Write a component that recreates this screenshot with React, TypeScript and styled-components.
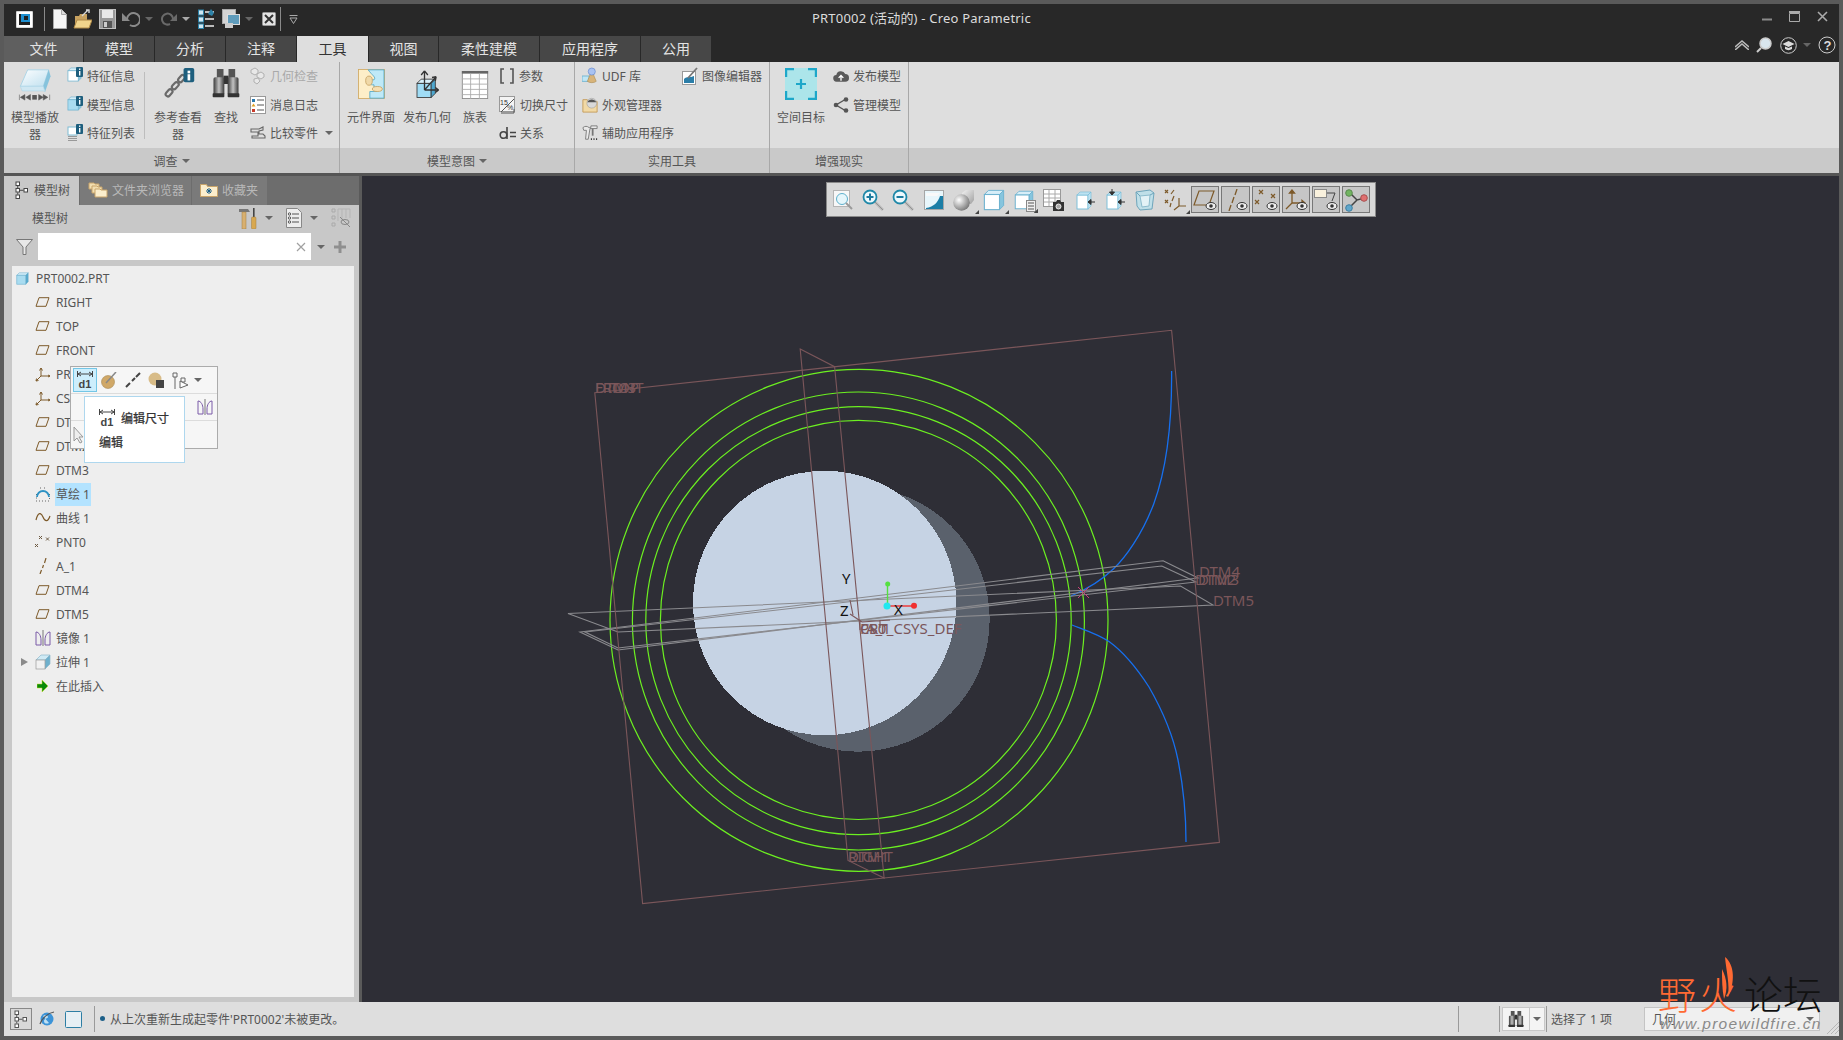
import React from "react";
import styled, { createGlobalStyle } from "styled-components";

const Global = createGlobalStyle`
  html, body { margin: 0; padding: 0; background: #5a5a5a; }
  #root { width: 1843px; height: 1040px; overflow: hidden; }
  * { box-sizing: border-box; }
`;

const FONT = `"Noto Sans", "Noto Sans CJK SC", sans-serif`;

const Window = styled.div`
  position: relative;
  width: 1843px;
  height: 1040px;
  padding: 4px;
  background: #5a5a5a;
  display: flex;
  flex-direction: column;
  font-family: ${FONT};
  font-size: 12px;
  color: #555;
`;

const G = styled.svg<{ $ml?: number; $mr?: number; $mt?: number }>`
  display: block;
  flex: none;
  margin-left: ${(p) => p.$ml ?? 0}px;
  margin-right: ${(p) => p.$mr ?? 0}px;
  margin-top: ${(p) => p.$mt ?? 0}px;
`;

const Caret = styled.span<{ $c?: string; $w?: number }>`
  display: block;
  flex: none;
  width: 0;
  height: 0;
  border-left: ${(p) => p.$w ?? 4}px solid transparent;
  border-right: ${(p) => p.$w ?? 4}px solid transparent;
  border-top: ${(p) => p.$w ?? 4}px solid ${(p) => p.$c ?? "#666"};
`;

/* ---------- title bar ---------- */
const TitleBar = styled.header`
  position: relative;
  height: 32px;
  background: #282828;
  display: flex;
  align-items: center;
  padding: 0 0 2px 12px;
`;
const TitleText = styled.div`
  position: absolute;
  left: 808px;
  top: 5px;
  font-size: 13px;
  line-height: 18px;
  letter-spacing: 0.2px;
  color: #dcdcdc;
  white-space: nowrap;
`;
const QatSep = styled.span<{ $ml: number }>`
  display: block;
  width: 1px;
  height: 24px;
  background: #8a8a8a;
  margin-left: ${(p) => p.$ml}px;
`;
const QatSlot = styled.span<{ $ml: number }>`
  display: flex;
  align-items: center;
  margin-left: ${(p) => p.$ml}px;
`;
const WinControls = styled.div`
  margin-left: auto;
  display: flex;
  align-items: center;
  gap: 17px;
  padding-right: 11px;
  margin-top: -5px;
`;

/* ---------- tabs ---------- */
const TabBar = styled.nav`
  height: 26px;
  background: #282828;
  display: flex;
  align-items: stretch;
  position: relative;
`;
const Tab = styled.div<{ $w: number; $kind?: "file" | "active" }>`
  width: ${(p) => p.$w}px;
  margin-right: 1px;
  padding-bottom: 2px;
  display: flex;
  align-items: center;
  justify-content: center;
  font-size: 14px;
  background: ${(p) => (p.$kind === "file" ? "#5f5f5f" : p.$kind === "active" ? "#dedede" : "#474747")};
  color: ${(p) => (p.$kind === "active" ? "#333" : "#e4e4e4")};
`;
const HelpTray = styled.div`
  position: absolute;
  right: 3px;
  top: -2px;
  display: flex;
  align-items: center;
  height: 22px;
`;

/* ---------- ribbon ---------- */
const Ribbon = styled.section`
  height: 111px;
  display: flex;
  background: #dedede;
`;
const Group = styled.div<{ $w: number }>`
  width: ${(p) => p.$w}px;
  display: flex;
  flex-direction: column;
  border-right: 1px solid #a8a8a8;
`;
const GroupBody = styled.div`
  height: 86px;
  display: flex;
  background: #dedede;
`;
const GroupLabel = styled.div`
  flex: 1;
  display: flex;
  align-items: center;
  justify-content: center;
  gap: 4px;
  background: #c9c9c9;
  color: #555;
`;
const RibbonRest = styled.div`
  flex: 1;
  display: flex;
  flex-direction: column;
`;
const RestTop = styled.div`
  height: 86px;
  background: #dedede;
`;
const RestBottom = styled.div`
  flex: 1;
  background: #c9c9c9;
`;
const Big = styled.div<{ $w: number; $ml: number }>`
  width: ${(p) => p.$w}px;
  margin-left: ${(p) => p.$ml}px;
  display: flex;
  flex-direction: column;
  align-items: center;
  text-align: center;
  flex: none;
`;
const BigIcon = styled.div<{ $pt: number }>`
  height: 47px;
  padding-top: ${(p) => p.$pt}px;
`;
const BigText = styled.div`
  line-height: 17px;
  color: #555;
  width: 100%;
`;
const SmallCol = styled.div<{ $w: number; $ml: number }>`
  width: ${(p) => p.$w}px;
  margin-left: ${(p) => p.$ml}px;
  flex: none;
  display: flex;
  flex-direction: column;
`;
const SmallRow = styled.div<{ $off?: boolean }>`
  height: 28.5px;
  display: flex;
  align-items: center;
  gap: 4px;
  white-space: nowrap;
  color: ${(p) => (p.$off ? "#a9a9a9" : "#555")};
`;
const RibbonSep = styled.span`
  display: block;
  width: 1px;
  height: 67px;
  margin: 10px 0 0 5px;
  background: #bdbdbd;
`;
const RowCaret = styled.span`
  margin-left: 3px;
`;
const Dark = styled.div`
  height: 3px;
  background: #555;
`;

/* ---------- main ---------- */
const Main = styled.main`
  flex: 1;
  min-height: 0;
  display: flex;
`;
const Left = styled.aside`
  width: 355px;
  display: flex;
  flex-direction: column;
  background: #c8c8c8;
`;
const PanelTabs = styled.div`
  height: 29px;
  flex: none;
  display: flex;
  background: #6d6d6d;
`;
const PanelTab = styled.div<{ $w: number; $on?: boolean }>`
  width: ${(p) => p.$w}px;
  display: flex;
  align-items: center;
  gap: ${(p) => (p.$on ? 5 : 4)}px;
  padding: 0 0 2px ${(p) => (p.$on ? 11 : 8)}px;
  margin-right: 1px;
  background: ${(p) => (p.$on ? "#c8c8c8" : "#7a7a7a")};
  color: ${(p) => (p.$on ? "#555" : "#b8b8b8")};
`;
const PanelHead = styled.div`
  height: 26px;
  flex: none;
  display: flex;
  align-items: center;
  padding-left: 28px;
  position: relative;
`;
const HeadTools = styled.div`
  margin-left: auto;
  padding-right: 8px;
  display: flex;
  align-items: center;
`;
const HeadGap = styled.span<{ $w: number }>`
  display: block;
  width: ${(p) => p.$w}px;
`;
const FilterRow = styled.div`
  height: 27px;
  margin-top: 2px;
  flex: none;
  display: flex;
  align-items: center;
  padding-left: 12px;
`;
const SearchBox = styled.div`
  width: 273px;
  height: 27px;
  margin-left: 5px;
  background: #fff;
  display: flex;
  align-items: center;
  justify-content: flex-end;
  padding-right: 4px;
  color: #9a9a9a;
`;
const Tree = styled.div`
  position: relative;
  flex: 1;
  margin: 6px 5px 5px 8px;
  padding-top: 0;
  background: #eeeeee;
`;
const Row = styled.div`
  height: 24px;
  display: flex;
  align-items: center;
  white-space: nowrap;
`;
const Gutter = styled.span<{ $w: number }>`
  width: ${(p) => p.$w}px;
  display: flex;
  justify-content: flex-end;
  flex: none;
`;
const RowIconBox = styled.span`
  width: 17px;
  display: flex;
  justify-content: center;
  flex: none;
`;
const Label = styled.span<{ $sel?: boolean }>`
  margin-left: 4px;
  padding: 0 1px;
  line-height: 23px;
  height: 23px;
  color: #555;
  background: ${(p) => (p.$sel ? "#b3e3ff" : "transparent")};
`;
const Expander = styled.span`
  display: block;
  width: 0;
  height: 0;
  margin-right: 6px;
  border-top: 4.5px solid transparent;
  border-bottom: 4.5px solid transparent;
  border-left: 7px solid #8a8a8a;
`;
const Mini = styled.div`
  position: absolute;
  left: 58px;
  top: 100px;
  width: 148px;
  height: 83px;
  background: #f6f6f6;
  border: 1px solid #ababab;
  display: flex;
  flex-direction: column;
`;
const MiniRow = styled.div<{ $line?: boolean }>`
  height: 27px;
  display: flex;
  align-items: center;
  flex: none;
  padding-left: 2px;
  border-bottom: ${(p) => (p.$line ? "1px solid #dcdcdc" : "0")};
`;
const MiniBtn = styled.span<{ $on?: boolean }>`
  width: 24px;
  height: 24px;
  display: flex;
  align-items: center;
  justify-content: center;
  background: ${(p) => (p.$on ? "#cdeefc" : "transparent")};
  border: 1px solid ${(p) => (p.$on ? "#74c6e6" : "transparent")};
`;
const MiniEnd = styled.span<{ $pr: number }>`
  margin-left: auto;
  padding-right: ${(p) => p.$pr}px;
`;
const Tip = styled.div`
  position: absolute;
  left: 72px;
  top: 130px;
  width: 101px;
  height: 67px;
  background: #fff;
  border: 1px solid #aed7ee;
  padding: 10px 0 0 14px;
  color: #333;
  -webkit-text-stroke: 0.25px #333;
`;
const TipRow = styled.div`
  display: flex;
  align-items: center;
  gap: 6px;
  height: 22px;
`;
const TipPlain = styled.div`
  height: 22px;
  line-height: 22px;
  margin-top: 3px;
`;

/* ---------- viewport ---------- */
const Viewport = styled.div`
  position: relative;
  flex: 1;
  margin-left: 3px;
  background: #2e2e36;
`;
const Scene = styled.svg`
  position: absolute;
  inset: 0;
  display: block;
`;
const ViewBar = styled.div`
  position: absolute;
  left: 464px;
  top: 6px;
  width: 550px;
  height: 35px;
  background: #d8d8d8;
  border: 1px solid #8a8a8a;
  display: flex;
  align-items: center;
  padding-left: 1px;
`;
const ViewBtn = styled.span<{ $on?: boolean }>`
  width: 28.2px;
  height: 27px;
  margin: 0 1px;
  flex: none;
  display: flex;
  align-items: center;
  justify-content: center;
  background: ${(p) => (p.$on ? "#c6c6c6" : "transparent")};
  border: 1px solid ${(p) => (p.$on ? "#777" : "transparent")};
`;

/* ---------- status ---------- */
const Status = styled.footer`
  height: 34px;
  flex: none;
  background: #dedede;
  display: flex;
  align-items: center;
  padding-left: 6px;
  color: #555;
`;
const StatusBox = styled.span`
  width: 22px;
  height: 22px;
  border: 1px solid #888;
  display: flex;
  align-items: center;
  justify-content: center;
  background: #d8d8d8;
`;
const StatusSlot = styled.span<{ $ml: number }>`
  margin-left: ${(p) => p.$ml}px;
  display: flex;
  align-items: center;
  flex: none;
`;
const StatusSep = styled.span<{ $ml: number }>`
  display: block;
  width: 1px;
  height: 26px;
  background: #9a9a9a;
  margin-left: ${(p) => p.$ml}px;
  flex: none;
`;
const Bullet = styled.span`
  width: 5px;
  height: 5px;
  border-radius: 50%;
  background: #1c5f88;
  margin: -2px 0 0 5px;
  flex: none;
`;
const Msg = styled.span`
  margin-left: 5px;
  white-space: nowrap;
`;
const RightStatus = styled.div`
  margin-left: auto;
  display: flex;
  align-items: center;
  height: 100%;
`;
const FindBtn = styled.span`
  width: 28px;
  height: 24px;
  margin-left: 2px;
  background: #f4f4f4;
  border: 1px solid #c8c8c8;
  display: flex;
  align-items: center;
  justify-content: center;
`;
const FindDrop = styled.span`
  width: 15px;
  height: 24px;
  background: #f4f4f4;
  border: 1px solid #c8c8c8;
  border-left: 0;
  display: flex;
  align-items: center;
  justify-content: center;
`;
const SelText = styled.span`
  margin-left: 4px;
  width: 93px;
  white-space: nowrap;
`;
const GeoSelect = styled.div`
  width: 176px;
  height: 24px;
  background: #f0f0f0;
  border: 1px solid #c4c4c4;
  display: flex;
  align-items: center;
  justify-content: space-between;
  padding: 0 5px 0 7px;
`;
const Grip = styled.span`
  width: 19px;
  display: flex;
  justify-content: flex-end;
  align-self: flex-end;
  padding-bottom: 2px;
`;

/* ---------- watermark ---------- */
const Mark = styled.div`
  position: absolute;
  left: 1660px;
  top: 955px;
  width: 170px;
  height: 80px;
  pointer-events: none;
  font-weight: 300;
`;
const MarkFire = styled.span`
  position: absolute;
  left: -2px;
  top: 17px;
  font-size: 38px;
  line-height: 44px;
  letter-spacing: 3px;
  color: #ff6a33;
  white-space: nowrap;
`;
const MarkForum = styled.span`
  position: absolute;
  left: 84px;
  top: 17px;
  font-size: 39px;
  line-height: 44px;
  color: #111;
  white-space: nowrap;
`;
const MarkUrl = styled.span`
  position: absolute;
  left: 0;
  top: 59px;
  font-family: "Liberation Sans", sans-serif;
  font-style: italic;
  font-size: 15.5px;
  line-height: 20px;
  letter-spacing: 1.3px;
  color: #8a8a8a;
  white-space: nowrap;
`;
const MarkFlame = styled.svg`
  position: absolute;
  left: 50px;
  top: 0;
`;

/* ---------- icons ---------- */
const Cube: React.FC<{ s: number; f?: string; t?: string; r?: string }> = ({ s, f = "#fff", t = "#d6eef8", r = "#86c5de" }) => (
  <G width={s} height={s} viewBox="0 0 16 16">
    <path d="M1 4l3-3h11l-3 3z" fill={t} stroke="#6fb3d0" strokeWidth=".7" />
    <path d="M12 4l3-3v11l-3 3z" fill={r} stroke="#6fb3d0" strokeWidth=".7" />
    <rect x="1" y="4" width="11" height="11" fill={f} stroke="#6fb3d0" strokeWidth=".8" />
  </G>
);
const InfoBadge = styled.svg`
  position: absolute;
  right: 0;
  top: 0;
`;
const Info: React.FC = () => (
  <InfoBadge width="7" height="10" viewBox="0 0 7 10">
    <rect width="7" height="10" rx="1" fill="#1e5f7e" />
    <rect x="3" y="1.500" width="1.400" height="1.400" fill="#fff" />
    <rect x="3" y="4" width="1.400" height="4.500" fill="#fff" />
  </InfoBadge>
);
const InfoWrap = styled.span`
  position: relative;
  display: block;
  width: 16px;
  height: 18px;
  flex: none;
`;
const FeatInfo: React.FC<{ f?: string }> = ({ f }) => (
  <InfoWrap>
    <Cube s={15} f={f} />
    <Info />
  </InfoWrap>
);
const ListInfo = () => (
  <InfoWrap>
    <G width="16" height="18" viewBox="0 0 16 18">
      <rect x="1" y="3" width="9" height="8" fill="#fff" stroke="#7fbcd4" />
      <path d="M1 12.500h9M1 14.500h9M1 16.500h9" stroke="#999" />
    </G>
    <Info />
  </InfoWrap>
);
const PlayerIcon = () => (
  <G width="36" height="33" viewBox="0 0 36 36">
    <defs>
      <linearGradient id="pl" x1="0" y1="0" x2="1" y2="1">
        <stop offset="0" stopColor="#fdfeff" />
        <stop offset="1" stopColor="#bfe0ef" />
      </linearGradient>
    </defs>
    <path d="M2 20L10 2h23l-6 18z" fill="url(#pl)" stroke="#a9d3e6" />
    <path d="M27 20l6-18 2 7-6 17z" fill="#86c3dc" />
    <path d="M2 20l2 5h23l2 1-2-6z" fill="#cfe7f2" stroke="#a9d3e6" strokeWidth=".6" />
    <path d="M1 29v6M7 29l-5 3 5 3zM13 29l-5 3 5 3z" fill="#555" stroke="#555" strokeWidth=".6" />
    <rect x="15" y="29.500" width="5" height="5" fill="#555" />
    <path d="M22 29l5 3-5 3zM27 29l5 3-5 3zM34 29v6" fill="#555" stroke="#555" strokeWidth=".6" />
  </G>
);
const ChainIcon = () => (
  <G width="32" height="32" viewBox="0 0 36 36" $ml={4}>
    <g fill="none" stroke="#6a6a6a" strokeWidth="2.400">
      <rect x="1" y="26" width="9" height="5" rx="2.500" transform="rotate(-48 5 28)" />
      <rect x="8" y="18" width="9" height="5" rx="2.500" transform="rotate(-48 12 20)" />
      <rect x="15" y="10" width="9" height="5" rx="2.500" transform="rotate(-48 19 12)" />
    </g>
    <rect x="22" y="0" width="12" height="16" rx="2" fill="#1e5f7e" />
    <rect x="26.500" y="3" width="3" height="3" fill="#fff" />
    <rect x="26.500" y="7" width="3" height="7" fill="#fff" />
  </G>
);
const BinoIcon: React.FC<{ w?: number; h?: number }> = ({ w = 32, h = 30 }) => (
  <G width={w} height={h} viewBox="0 0 32 36">
    <defs>
      <linearGradient id="bn" x1="0" y1="0" x2="1" y2="0">
        <stop offset="0" stopColor="#3c3c3c" />
        <stop offset=".5" stopColor="#c2c2c2" />
        <stop offset="1" stopColor="#3a3a3a" />
      </linearGradient>
    </defs>
    <rect x="5" y="0" width="8" height="12" fill="#555" />
    <rect x="19" y="0" width="8" height="12" fill="#555" />
    <rect x="13" y="8" width="6" height="10" fill="#333" />
    <rect x="1" y="10" width="13" height="21" rx="2" fill="url(#bn)" />
    <rect x="18" y="10" width="13" height="21" rx="2" fill="url(#bn)" />
    <rect x="0" y="29" width="14" height="5" rx="1" fill="#333" />
    <rect x="18" y="29" width="14" height="5" rx="1" fill="#333" />
  </G>
);
const GeoCheck = () => (
  <G width="16" height="18" viewBox="0 0 16 18">
    <path d="M1 3l4-2 3 2v3l-3 2-4-2zM7 7l4-2 3 2v3l-3 2-4-2zM4 12l4-1 2 3-3 3-3-2z" fill="#e8e8e8" stroke="#b0b0b0" />
  </G>
);
const LogIcon = () => (
  <G width="16" height="18" viewBox="0 0 16 18">
    <rect x=".5" y=".5" width="15" height="17" fill="#fff" stroke="#999" />
    <path d="M7 4h7M7 9h7M7 14h7" stroke="#555" />
    <rect x="2" y="3" width="3" height="3" fill="#2a7ab0" />
    <path d="M3.500 7.500l2 3h-4z" fill="#e0a020" />
    <rect x="2" y="13" width="3" height="3" fill="#c83a2a" />
  </G>
);
const CompareIcon = () => (
  <G width="16" height="16" viewBox="0 0 16 16">
    <path d="M1 4h8l4-2v3l-4 1v3h4l2 2v2H2v-2h6V7H1z" fill="none" stroke="#666" strokeWidth="1.100" />
  </G>
);
const PuzzleIcon = () => (
  <G width="31" height="30" viewBox="0 0 32 36">
    <rect x=".5" y=".5" width="31" height="35" fill="#fdeec8" stroke="#d0a860" />
    <path d="M12 1h19v34H14v-8h8c3 0 3-4 0-4h-3v-4h-2c-6 0-6-6 0-6h2c3-3-2-5-7-12z" fill="#bfe9f7" stroke="#4ea6c8" />
    <ellipse cx="13" cy="14" rx="4" ry="5.500" fill="#f0d9a8" stroke="#c7a264" />
    <ellipse cx="23" cy="24" rx="6" ry="3" fill="#f6dfb2" stroke="#c7a264" />
  </G>
);
const PublishIcon = () => (
  <G width="32" height="30" viewBox="5 0 32 36">
    <rect x="9" y="16" width="17" height="17" fill="#9fdcf5" stroke="#333" />
    <path d="M9 16l5-5h17l-5 5z" fill="#d9f1fb" stroke="#333" />
    <path d="M26 16l5-5v17l-5 5z" fill="#4ea8d0" stroke="#333" />
    <path d="M18 24V1M18 1l-4 5M18 1l4 5M18 24l14-16M32 8l-5 1M32 8l-1 5M18 24h17M35 24l-4-3M35 24l-4 3" stroke="#333" strokeWidth="1.600" fill="none" />
  </G>
);
const TableIcon = () => (
  <G width="30" height="28" viewBox="0 0 30 32">
    <rect x=".5" y=".5" width="29" height="31" fill="#fff" stroke="#888" />
    <rect x="0" y="0" width="30" height="3" fill="#666" />
    <path d="M0 9h30M0 15h30M0 21h30M0 27h30M10 3v29M20 3v29" stroke="#aaa" />
  </G>
);
const ParamIcon = () => (
  <G width="16" height="18" viewBox="0 0 16 18">
    <path d="M5 2H2v14h3M11 2h3v14h-3" stroke="#555" strokeWidth="1.600" fill="none" />
  </G>
);
const SwitchDim = () => (
  <G width="17" height="18" viewBox="0 0 17 18">
    <rect x=".5" y=".5" width="15" height="15" fill="#f4f4f4" stroke="#999" />
    <text x="1" y="9" fontSize="7" fill="#333" fontFamily="Liberation Sans">15</text>
    <text x="8" y="14" fontSize="7" fill="#333" fontFamily="Liberation Sans">%</text>
    <path d="M2 16L15 3M15 13v4H2" stroke="#555" fill="none" />
  </G>
);
const RelIcon = () => (
  <G width="17" height="18" viewBox="0 0 17 18">
    <circle cx="4.500" cy="11" r="3.300" fill="none" stroke="#444" strokeWidth="1.600" />
    <path d="M8 3v12M11 8.500h6M11 12.500h6" stroke="#444" strokeWidth="1.600" />
  </G>
);
const UdfIcon = () => (
  <G width="16" height="18" viewBox="0 0 18 18">
    <rect x="0" y="9" width="8" height="6" fill="#bfe6f5" stroke="#6fb3d0" />
    <path d="M11 3l5 12c-2 2-8 2-10 0z" fill="#d8b47a" stroke="#a58548" strokeWidth=".6" />
    <circle cx="11" cy="4" r="4" fill="#a8c2f2" stroke="#5f84cc" strokeWidth=".7" />
  </G>
);
const AppearIcon = () => (
  <G width="16" height="18" viewBox="0 0 18 18">
    <path d="M1 3h5l1 2h10v12H1z" fill="#f1d9a6" stroke="#c49a56" />
    <circle cx="11" cy="7" r="5.500" fill="#d9d9d9" stroke="#888" strokeWidth=".5" />
    <path d="M6 6a5.500 5.500 0 0 1 10 0z" fill="#555" />
  </G>
);
const AuxIcon = () => (
  <G width="16" height="18" viewBox="0 0 18 18">
    <path d="M1 3c2-2 5-2 7 0l2 0 0-2h7v3H9L7 16 4 16 5 6 2 6z" fill="#e9e9e9" stroke="#777" />
    <path d="M12 4v8" stroke="#777" strokeWidth="2" />
    <path d="M10 16h1M13 16h1M16 16h1" stroke="#111" strokeWidth="2" />
  </G>
);
const ImgEdit = () => (
  <G width="16" height="18" viewBox="0 0 16 18">
    <rect x=".5" y="4.500" width="13" height="13" fill="#fff" stroke="#9a9a9a" />
    <path d="M2 16v-4c3-3 6-1 10-3v7z" fill="#2b7ea8" />
    <path d="M6 11L15 1" stroke="#777" strokeWidth="1.800" />
  </G>
);
const TargetIcon = () => (
  <G width="32" height="32" viewBox="0 0 32 32">
    <rect width="32" height="32" fill="#ace5ea" />
    <path d="M1 9V1h8M23 1h8v8M31 23v8h-8M9 31H1v-8" fill="none" stroke="#1da7c9" strokeWidth="2.400" />
    <path d="M16 11v10M11 16h10" stroke="#1da7c9" strokeWidth="2.200" />
  </G>
);
const CloudIcon = () => (
  <G width="16" height="14" viewBox="0 0 17 14">
    <path d="M4 13a3.500 3.500 0 0 1-.5-7A5 5 0 0 1 13 5a4 4 0 0 1 0 8z" fill="#5a5a5a" />
    <path d="M8.500 12V7M6 9l2.500-2.500L11 9" stroke="#fff" strokeWidth="1.400" fill="none" />
  </G>
);
const ShareIcon = () => (
  <G width="16" height="16" viewBox="0 0 16 16">
    <path d="M13 2L3 8l10 6" stroke="#555" strokeWidth="1.400" fill="none" />
    <circle cx="13" cy="2.500" r="2.300" fill="#555" />
    <circle cx="3" cy="8" r="2.300" fill="#555" />
    <circle cx="13" cy="13.500" r="2.300" fill="#555" />
  </G>
);

/* Tree icons */
const BR = "#7d5a2a";
const Plane = () => (
  <G width="15" height="10" viewBox="0 0 15 10">
    <path d="M4 .7h10L11 9.300H1z" fill="none" stroke={BR} />
  </G>
);
const Csys = () => (
  <G width="16" height="16" viewBox="0 0 16 16">
    <path d="M6 10V2M6 2L4.500 4.500M6 2l1.500 2.500M6 10h9M15 10l-2-1M15 10l-2 1M6 10l-5 5M1 15l.5-2.500M1 15l2.500-.5" stroke={BR} fill="none" />
  </G>
);
const SketchI = () => (
  <G width="16" height="15" viewBox="0 0 16 15">
    <path d="M1 7.500h1M1 11h1M1 14h1M4 14h1M7 14h1M10 14h1M13 14h1M14.500 11v1M14.500 7v1M5 1h1M9 1h1" stroke="#666" />
    <path d="M2 10a6 6 0 0 1 12 0" fill="none" stroke="#2d92c4" strokeWidth="1.800" />
  </G>
);
const CurveI = () => (
  <G width="16" height="10" viewBox="0 0 16 10">
    <path d="M1 7c2-8 5-8 7-3s5 5 7-1" fill="none" stroke={BR} strokeWidth="1.200" />
  </G>
);
const PointsI = () => (
  <G width="16" height="14" viewBox="0 0 16 14">
    <path d="M4 1l3 3M7 1L4 4M11 2.500l3 3M14 2.500l-3 3M0 9l3 3M3 9l-3 3" stroke="#6d5a42" />
  </G>
);
const AxisI = () => (
  <G width="10" height="16" viewBox="0 0 10 16">
    <path d="M8 0L6.500 5M5.500 7L4.500 10M3.500 12L2 16" stroke={BR} strokeWidth="1.200" />
  </G>
);
const MirrorI = () => (
  <G width="16" height="16" viewBox="0 0 16 16">
    <path d="M1 15V2c3 0 5 4 5 8v5zM15 15V2c-3 0-5 4-5 8v5z" fill="none" stroke="#7a5ba8" />
    <path d="M8 0v16" stroke="#777" />
  </G>
);
const ExtrudeI = () => (
  <G width="16" height="16" viewBox="0 0 16 16">
    <path d="M1 6l5-5h9L10 6z" fill="#cfeaf5" stroke="#8cb8cc" strokeWidth=".7" />
    <path d="M10 6l5-5v9l-5 5z" fill="#6fb0cc" stroke="#8cb8cc" strokeWidth=".7" />
    <rect x="1" y="6" width="9" height="9" fill="#f1f1f1" stroke="#999" strokeWidth=".7" />
  </G>
);
const InsertI = () => (
  <G width="12" height="12" viewBox="0 0 12 12">
    <path d="M0 4h5V0l6 6-6 6V8H0z" fill="#0a8a0a" stroke="#c8e020" strokeWidth=".5" />
  </G>
);
const Dim: React.FC = () => (
  <G width="16" height="18" viewBox="0 0 16 18">
    <path d="M.5 0v6M15.500 0v6M1 3h14M1 3l3-2M1 3l3 2M15 3l-3-2M15 3l-3 2" stroke="#444" fill="none" />
    <text x="1.500" y="17" fontSize="11" fontWeight="700" fontFamily="Liberation Sans" fill="#444">d1</text>
  </G>
);

/* header tools */
const ToolsI = () => (
  <G width="18" height="21" viewBox="0 0 18 21">
    <path d="M0 1h9l2 3H0z" fill="#777" />
    <rect x="3" y="4" width="4" height="17" fill="#d8b070" stroke="#a07c40" strokeWidth=".5" />
    <rect x="14" y="0" width="1.600" height="9" fill="#444" />
    <rect x="12.500" y="9" width="4.500" height="12" rx="1" fill="#d8a850" stroke="#a07c40" strokeWidth=".5" />
  </G>
);
const ListDoc = () => (
  <G width="16" height="20" viewBox="0 0 16 20">
    <path d="M.5.500h11l4 4v15H.5z" fill="#eee" stroke="#888" />
    <path d="M6 6h7M6 10h7M6 14h7" stroke="#555" />
    <circle cx="3.500" cy="6" r="1.200" fill="none" stroke="#555" />
    <circle cx="3.500" cy="10" r="1.200" fill="none" stroke="#555" />
    <circle cx="3.500" cy="14" r="1.200" fill="none" stroke="#555" />
  </G>
);
const ShowI = () => (
  <G width="20" height="20" viewBox="0 0 20 20">
    <path d="M1 1h3v3H1zM1 8h3v3H1zM1 15h3v3H1z" fill="none" stroke="#aaa" />
    <path d="M7 1h12v9M7 1v12M11 1v12M15 1v9" stroke="#b5b5b5" fill="none" />
    <ellipse cx="14" cy="14" rx="4" ry="2.500" fill="none" stroke="#888" />
    <path d="M9 9l10 10" stroke="#888" />
  </G>
);
const FilterI = () => (
  <G width="17" height="16" viewBox="0 0 17 16">
    <path d="M.5.500h16L10 8v7.500H7V8z" fill="#e8e8e8" stroke="#777" />
  </G>
);
const TreeMini: React.FC<{ c?: string }> = ({ c = "#444" }) => (
  <G width="14" height="18" viewBox="0 0 14 18">
    <rect x="1" y="1" width="3.500" height="3.500" fill="#fff" stroke={c} />
    <rect x="1" y="7.500" width="3.500" height="3.500" fill="#fff" stroke={c} />
    <rect x="1" y="14" width="3.500" height="3.500" fill="#fff" stroke={c} />
    <rect x="9" y="7.500" width="3.500" height="3.500" fill="#fff" stroke={c} />
    <path d="M2.750 5v2M2.750 11.500v2M5 9.250h3.500" stroke={c} />
  </G>
);
const FoldersI = () => (
  <G width="20" height="18" viewBox="0 0 20 18">
    <path d="M1 5V2h5l1 1h4v5H1z" fill="#f2deb0" stroke="#c8a46a" />
    <path d="M4 9V5h5l1 1h4v6H4z" fill="#f2deb0" stroke="#c8a46a" />
    <path d="M7 16V8h5l1 1h6v7z" fill="#fbeecd" stroke="#c8a46a" />
  </G>
);
const FavI = () => (
  <G width="18" height="16" viewBox="0 0 18 16">
    <path d="M.5 14.500V2.500h6l1 2h10v10z" fill="#fbeecd" stroke="#c8a46a" />
    <path d="M9 6v6M6 9h6M7 7l4 4M11 7l-4 4" stroke="#1c5f88" />
  </G>
);

/* QAT */
const Logo = () => (
  <G width="17" height="17" viewBox="0 0 17 17">
    <rect x=".75" y=".75" width="15.500" height="15.500" fill="#fff" stroke="#fff" />
    <rect x="3" y="3" width="11" height="11" fill="#202020" />
    <path d="M5 3h9v8H5z" fill="#1f8fcf" />
    <path d="M8 5h4v4H8z" fill="#202020" />
  </G>
);
const DocI = () => (
  <G width="14" height="20" viewBox="0 0 14 20">
    <path d="M.5.500h8l5 5v14H.5z" fill="#f6f6f6" stroke="#aaa" />
    <path d="M8.500.500v5h5" fill="#ddd" stroke="#aaa" />
  </G>
);
const OpenI = () => (
  <G width="19" height="20" viewBox="0 0 19 20">
    <path d="M2 19V7h4l1-2h7v14z" fill="#c8a260" />
    <path d="M1 19l3-8h15l-3 8z" fill="#f0d48c" stroke="#b08a48" />
    <path d="M9 7L15 1M13 1l3 0 0 3" stroke="#d8d8d8" strokeWidth="1.400" fill="none" />
  </G>
);
const SaveI = () => (
  <G width="17" height="20" viewBox="0 0 17 20">
    <rect x=".5" y=".5" width="16" height="19" fill="#9a9a9a" stroke="#c0c0c0" />
    <rect x="3" y="1" width="11" height="8" fill="#e8e8e8" />
    <rect x="4" y="12" width="9" height="7" fill="#555" />
    <rect x="5" y="13" width="3" height="5" fill="#ccc" />
  </G>
);
const UndoI = () => (
  <G width="18" height="16" viewBox="0 0 18 16">
    <path d="M5 8a6.500 6.500 0 1 1 3 6" fill="none" stroke="#8a8a8a" strokeWidth="2" />
    <path d="M0 2v8h8z" fill="#8a8a8a" />
  </G>
);
const RedoI = () => (
  <G width="16" height="14" viewBox="0 0 16 14">
    <path d="M12 7a5.500 5.500 0 1 0-3 5" fill="none" stroke="#6a6a6a" strokeWidth="2" />
    <path d="M16 2v7H9z" fill="#6a6a6a" />
  </G>
);
const RegenI = () => (
  <G width="17" height="20" viewBox="0 0 17 20">
    <rect x=".5" y="1" width="5" height="5" fill="#cfe7f2" stroke="#2d82a8" />
    <rect x=".5" y="8" width="5" height="5" fill="#cfe7f2" stroke="#2d82a8" />
    <rect x=".5" y="15" width="5" height="4.500" fill="#cfe7f2" stroke="#2d82a8" />
    <path d="M7 3h9M7 10h9M7 17h9" stroke="#bcbcbc" strokeWidth="2" />
    <path d="M10 5l3-5 3 4-2 3z" fill="#2d82a8" />
  </G>
);
const WinsI = () => (
  <G width="18" height="20" viewBox="0 0 18 20">
    <rect x=".5" y=".5" width="13" height="14" fill="#d4d4d4" stroke="#aaa" />
    <rect x="5.500" y="5.500" width="12" height="10" fill="#5f9cbc" stroke="#ddd" />
    <rect x="3" y="14" width="8" height="5" fill="#ccc" />
  </G>
);
const CloseDocI = () => (
  <G width="14" height="14" viewBox="0 0 14 14">
    <rect x=".5" y=".5" width="13" height="13" rx="1" fill="#e4e4e4" stroke="#999" />
    <path d="M3 3l8 8M11 3l-8 8" stroke="#333" strokeWidth="2" />
  </G>
);
const Customize = () => (
  <G width="9" height="9" viewBox="0 0 9 9">
    <path d="M.5.500h8M1 3h7L4.500 8.500z" fill="none" stroke="#aaa" />
  </G>
);

/* view toolbar icons */
const Glass: React.FC<{ plus?: boolean; minus?: boolean }> = ({ plus, minus }) => (
  <G width="22" height="22" viewBox="0 0 22 22">
    <path d="M13 13l8 8" stroke="#bcbcbc" strokeWidth="3" />
    <path d="M13 13l8 8" stroke="#777" strokeWidth=".6" />
    <circle cx="8" cy="8" r="6.500" fill="#eef9fd" stroke="#1e88a8" strokeWidth="1.800" />
    {(plus || minus) && <path d="M4.500 8h7" stroke="#1d7a9e" strokeWidth="2" />}
    {plus && <path d="M8 4.500v7" stroke="#1d7a9e" strokeWidth="2" />}
  </G>
);
const ZoomBox = () => (
  <G width="20" height="20" viewBox="0 0 20 20">
    <rect x=".5" y=".5" width="16" height="16" fill="#f7f7f7" stroke="#b5b5b5" />
    <circle cx="9" cy="9" r="5.500" fill="#e5f6fb" stroke="#5fb0cc" />
    <path d="M13 13l6 6" stroke="#9a9a9a" strokeWidth="2" />
  </G>
);
const FitI = () => (
  <G width="20" height="20" viewBox="0 0 20 20">
    <rect width="20" height="20" fill="#a6a6a6" />
    <rect x="1" y="1" width="18" height="18" fill="#e8f6fb" />
    <path d="M2 18c8-1 12-6 14-12l3 0v13H2z" fill="#1c7ea6" />
    <path d="M2 3h14l-3 3H2z" fill="#f9f9f9" />
  </G>
);
const Corner = styled.span`
  position: relative;
  display: block;
  &::after {
    content: "";
    position: absolute;
    right: -4px;
    bottom: -3px;
    border-left: 4px solid transparent;
    border-bottom: 4px solid #444;
  }
`;
const ShadeI = () => (
  <G width="22" height="22" viewBox="0 0 22 22">
    <defs>
      <radialGradient id="sp" cx=".35" cy=".35" r=".7">
        <stop offset="0" stopColor="#fff" />
        <stop offset="1" stopColor="#777" />
      </radialGradient>
      <linearGradient id="sb" x1="0" y1="0" x2="1" y2="1">
        <stop offset="0" stopColor="#f2f2f2" />
        <stop offset="1" stopColor="#a0a0a0" />
      </linearGradient>
    </defs>
    <path d="M9 4l4-3h8v10l-3 4H9z" fill="url(#sb)" />
    <circle cx="8.500" cy="13.500" r="8.300" fill="url(#sp)" />
  </G>
);
const CubeShot = () => (
  <G width="22" height="22" viewBox="0 0 22 22">
    <rect x=".5" y=".5" width="17" height="17" fill="#fff" stroke="#999" />
    <path d="M1 5h16M1 9h16M1 13h16M6 1v16M12 1v16" stroke="#aaa" />
    <path d="M10 13h3l1-2h3l1 2h3v9H10z" fill="#333" />
    <circle cx="15.500" cy="17.500" r="2.500" fill="#aaa" stroke="#eee" />
  </G>
);
const CornerWrap = styled(Corner)`
  width: 20px;
  height: 20px;
`;
const DocBadge = styled.svg`
  position: absolute;
  right: -2px;
  bottom: -2px;
`;
const CubeDoc = () => (
  <CornerWrap>
    <Cube s={20} />
    <DocBadge width="10" height="12" viewBox="0 0 10 12">
      <rect x=".5" y=".5" width="9" height="11" fill="#eee" stroke="#888" />
      <path d="M2 3h6M2 6h6M2 9h6" stroke="#555" />
    </DocBadge>
  </CornerWrap>
);
const ArrowCube: React.FC<{ up?: boolean }> = ({ up }) => (
  <G width="22" height="22" viewBox="0 0 22 22">
    <rect x="3" y="6" width="11" height="14" fill="#fff" stroke="#7fc0da" />
    <path d="M14 6l3-3v14l-3 3zM3 6l3-3h11l-3 3z" fill="#bde2f1" stroke="#7fc0da" strokeWidth=".7" />
    <path d="M21 13h-7M14 13l3-2.500v5z" fill="#333" stroke="#333" />
    {up && <path d="M8 0v6M8 6L5.500 3h5z" fill="#333" stroke="#333" />}
  </G>
);
const GlassCube = () => (
  <G width="20" height="22" viewBox="0 0 20 22">
    <path d="M1 3l14-2 4 3-2 16-12 1-3-4z" fill="#bfdfe8" stroke="#6ea5bb" />
    <path d="M5 7l10-1-1 11-7 1z" fill="#e3f2f6" stroke="#8dbccd" />
    <path d="M1 3l4 4M19 4l-4 2" stroke="#6ea5bb" />
  </G>
);
const Annot = () => (
  <G width="22" height="22" viewBox="0 0 22 22">
    <path d="M1 1l3 3M4 1L1 4M10 1l-3 4M1 11l3 3M4 11l-3 3M10 7L8 12M7 14L6 18" stroke={BR} strokeWidth="1.200" />
    <path d="M15 9v8M15 17h7M15 17l-5 4" stroke={BR} strokeWidth="1.200" />
  </G>
);
const Eye = () => (
  <g>
    <ellipse cx="18" cy="17" rx="5" ry="3.500" fill="#eee" stroke="#333" />
    <circle cx="18" cy="17" r="1.800" fill="#333" />
  </g>
);
const VPlane = () => (
  <G width="24" height="22" viewBox="0 0 24 22">
    <path d="M6 2h15l-5 14H1z" fill="none" stroke={BR} strokeWidth="1.200" />
    <Eye />
  </G>
);
const VAxis = () => (
  <G width="24" height="22" viewBox="0 0 24 22">
    <path d="M13 0l-2 6M10 8L8 14M7 16l-2 6" stroke={BR} strokeWidth="1.300" />
    <Eye />
  </G>
);
const VPts = () => (
  <G width="24" height="22" viewBox="0 0 24 22">
    <path d="M5 1l4 4M9 1L5 5M17 5l4 4M21 5l-4 4M1 11l4 4M5 11l-4 4" stroke={BR} strokeWidth="1.200" />
    <Eye />
  </G>
);
const VCsys = () => (
  <G width="24" height="22" viewBox="0 0 24 22">
    <path d="M8 14V1M8 1L5.500 4h5zM8 14h13M21 14l-3-2.500v5zM8 14l-6 6" stroke={BR} strokeWidth="1.300" fill={BR} />
    <Eye />
  </G>
);
const VNote = () => (
  <G width="24" height="22" viewBox="0 0 24 22">
    <rect x=".5" y=".5" width="12" height="8" fill="#f9f1dd" stroke="#8a8a8a" />
    <path d="M13 4h8l-3 8" fill="none" stroke="#444" />
    <Eye />
  </G>
);
const VTree = () => (
  <G width="24" height="24" viewBox="0 0 24 24">
    <path d="M6 5l7 7 8-2M13 12l-7 7" stroke="#444" strokeWidth="1.500" fill="none" />
    <circle cx="5" cy="5" r="3.300" fill="#72b561" stroke="#5a8a50" />
    <circle cx="20" cy="10" r="3.300" fill="#e07070" stroke="#a85050" />
    <circle cx="5" cy="20" r="3.300" fill="#5fa7cc" stroke="#3f7fa0" />
  </G>
);

/* data */
const treeRows: { icon: React.ReactNode; text: string; sel?: boolean; exp?: boolean }[] = [
  { icon: <Plane />, text: "RIGHT" },
  { icon: <Plane />, text: "TOP" },
  { icon: <Plane />, text: "FRONT" },
  { icon: <Csys />, text: "PRT_CSYS_DEF" },
  { icon: <Csys />, text: "CS0" },
  { icon: <Plane />, text: "DTM1" },
  { icon: <Plane />, text: "DTM2" },
  { icon: <Plane />, text: "DTM3" },
  { icon: <SketchI />, text: "草绘 1", sel: true },
  { icon: <CurveI />, text: "曲线 1" },
  { icon: <PointsI />, text: "PNT0" },
  { icon: <AxisI />, text: "A_1" },
  { icon: <Plane />, text: "DTM4" },
  { icon: <Plane />, text: "DTM5" },
  { icon: <MirrorI />, text: "镜像 1" },
  { icon: <ExtrudeI />, text: "拉伸 1", exp: true },
  { icon: <InsertI />, text: "在此插入" },
];

const viewIcons: { icon: React.ReactNode; on?: boolean; corner?: boolean }[] = [
  { icon: <ZoomBox /> },
  { icon: <Glass plus /> },
  { icon: <Glass minus /> },
  { icon: <FitI /> },
  { icon: <ShadeI />, corner: true },
  { icon: <Cube s={22} />, corner: true },
  { icon: <CubeDoc />, corner: true },
  { icon: <CubeShot /> },
  { icon: <ArrowCube /> },
  { icon: <ArrowCube up /> },
  { icon: <GlassCube /> },
  { icon: <Annot />, corner: true },
  { icon: <VPlane />, on: true },
  { icon: <VAxis />, on: true },
  { icon: <VPts />, on: true },
  { icon: <VCsys />, on: true },
  { icon: <VNote />, on: true },
  { icon: <VTree />, on: true },
];

const PL = "#7b565a";
const lbl = { fontFamily: `"Noto Sans", sans-serif`, fontSize: 15, fill: PL } as const;
const blk = { fontFamily: `"Noto Sans", sans-serif`, fontSize: 15, fill: "#111" } as const;

const Model = () => (
  <Scene width="1477" height="826" viewBox="362 176 1477 826">
    <ellipse cx="858" cy="619.500" rx="131.700" ry="132.200" fill="#5a616c" shapeRendering="crispEdges" />
    <ellipse cx="824.700" cy="603" rx="131.700" ry="132.200" fill="#c6d3e4" shapeRendering="crispEdges" />
    <g fill="none" stroke="#6cf021" strokeWidth="1.200">
      <ellipse cx="859" cy="620.300" rx="249" ry="251" />
      <ellipse cx="858.400" cy="621" rx="226" ry="229" />
      <ellipse cx="858.500" cy="620.600" rx="212.700" ry="214" />
      <ellipse cx="858.400" cy="619.900" rx="198" ry="199.600" />
    </g>
    <g fill="none" stroke="#1670f0" strokeWidth="1.300">
      <path d="M1171.600 371C1172 420 1168 465 1153.800 503.700C1142 535 1125 558 1113.600 568.800C1102 580 1090 588 1071 596" />
      <path d="M1072 625C1085 630 1098 634 1109 641.500C1125 653 1138 670 1149 687C1165 715 1174 740 1178 760C1184 790 1186 815 1186 842" />
    </g>
    <g fill="none" stroke="#8a8a8e" strokeWidth="1.100">
      <path d="M1163 560.700L1198 578L618 650L580 632Z" />
      <path d="M1161.700 566L1196 582L618 648L585 632Z" />
      <path d="M568 613.500L1180.500 586L1213 605L618 632Z" />
    </g>
    <g fill="none" stroke={PL} strokeWidth="1.100">
      <path d="M594.800 392.700L1171.600 330.300L1219.400 842.400L642.600 903.600Z" />
      <path d="M800.200 349.100L834.600 366.700L884.100 878L848 860.400Z" />
      <path d="M850 600L853 615M850 614L862 622M862 622L890 620M880 620V628M860 620V630" />
    </g>
    <path d="M1078 587L1089 598M1089 587L1078 598" stroke="#c8407a" />
    <g strokeWidth="1.400">
      <path d="M887.500 606V584" stroke="#55e040" />
      <path d="M887 606H914" stroke="#f03030" />
    </g>
    <circle cx="887.700" cy="584" r="2.500" fill="#55e040" />
    <circle cx="914" cy="605.700" r="3" fill="#f03030" />
    <circle cx="887" cy="606" r="3.500" fill="#20e8f0" />
    <text x="894" y="615" {...blk}>X</text>
    <text x="842" y="584" {...blk}>Y</text>
    <text x="840" y="616" {...blk}>Z</text>
    <text x="595" y="393" {...lbl}>FRONT</text>
    <text x="595" y="393" {...lbl}>DTM3</text>
    <text x="610" y="393" {...lbl}>TOP</text>
    <text x="1199" y="577" {...lbl}>DTM4</text>
    <text x="1195" y="585" {...lbl}>DTM2</text>
    <text x="1198" y="585" {...lbl}>DTM3</text>
    <text x="1213" y="606" {...lbl}>DTM5</text>
    <text x="848" y="862" {...lbl}>RIGHT</text>
    <text x="848" y="862" {...lbl}>DTM1</text>
    <text x="860" y="634" {...lbl}>PRT_CSYS_DEF</text>
    <text x="860" y="634" {...lbl}>CS0</text>
    <text x="866" y="634" {...lbl}>A_1</text>
  </Scene>
);

export default function App() {
  return (
    <Window>
      <Global />
      <TitleBar>
        <Logo />
        <QatSep $ml={11} />
        <QatSlot $ml={8}><DocI /></QatSlot>
        <QatSlot $ml={6}><OpenI /></QatSlot>
        <QatSlot $ml={7}><SaveI /></QatSlot>
        <QatSlot $ml={6}><UndoI /></QatSlot>
        <QatSlot $ml={5}><Caret $c="#666" /></QatSlot>
        <QatSlot $ml={8}><RedoI /></QatSlot>
        <QatSlot $ml={5}><Caret $c="#aaa" /></QatSlot>
        <QatSlot $ml={8}><RegenI /></QatSlot>
        <QatSlot $ml={7}><WinsI /></QatSlot>
        <QatSlot $ml={5}><Caret $c="#666" /></QatSlot>
        <QatSlot $ml={9}><CloseDocI /></QatSlot>
        <QatSep $ml={4} />
        <QatSlot $ml={8}><Customize /></QatSlot>
        <TitleText>PRT0002 (活动的) - Creo Parametric</TitleText>
        <WinControls>
          <G width="10" height="10" viewBox="0 0 10 10"><path d="M0 7.500h10" stroke="#8a8a8a" strokeWidth="2" /></G>
          <G width="11" height="11" viewBox="0 0 11 11"><path d="M.5 2.500h10v8H.5z" fill="none" stroke="#aaa" /><path d="M0 1h11" stroke="#aaa" strokeWidth="2" /></G>
          <G width="11" height="11" viewBox="0 0 11 11"><path d="M1 1l9 9M10 1l-9 9" stroke="#aaa" strokeWidth="1.600" /></G>
        </WinControls>
      </TitleBar>
      <TabBar>
        <Tab $w={79} $kind="file">文件</Tab>
        <Tab $w={70}>模型</Tab>
        <Tab $w={70}>分析</Tab>
        <Tab $w={70}>注释</Tab>
        <Tab $w={71} $kind="active">工具</Tab>
        <Tab $w={69}>视图</Tab>
        <Tab $w={100}>柔性建模</Tab>
        <Tab $w={100}>应用程序</Tab>
        <Tab $w={70}>公用</Tab>
        <HelpTray>
          <G width="14" height="10" viewBox="0 0 14 10" $mr={7}><path d="M0 7l7-6 7 6M0 10l7-6 7 6" fill="none" stroke="#bbb" strokeWidth="1.500" /></G>
          <G width="16" height="16" viewBox="0 0 16 16" $mr={8}><circle cx="9.500" cy="6.500" r="5.500" fill="#d9e6ee" stroke="#ccc" strokeWidth="1.500" /><path d="M5 11l-4 4" stroke="#ccc" strokeWidth="2" /></G>
          <G width="17" height="17" viewBox="0 0 17 17" $mr={6}><circle cx="8.500" cy="8.500" r="7.800" fill="none" stroke="#ccc" /><path d="M2.500 7l6-3 6 3-6 3z" fill="#ddd" /><path d="M5 9.500v2.500c2 1.500 5 1.500 7 0V9.500l-3.500 1.500z" fill="#ddd" /></G>
          <Caret $c="#666" />
          <G width="18" height="18" viewBox="0 0 18 18" $ml={7}><circle cx="9" cy="9" r="8" fill="none" stroke="#ccc" /><text x="5.500" y="13.500" fontSize="13" fontWeight="700" fill="#ddd" fontFamily="Liberation Sans">?</text></G>
        </HelpTray>
      </TabBar>
      <Ribbon>
        <Group $w={336}>
          <GroupBody>
            <Big $w={50} $ml={6}>
              <BigIcon $pt={6}><PlayerIcon /></BigIcon>
              <BigText>模型播放器</BigText>
            </Big>
            <SmallCol $w={72} $ml={7}>
              <SmallRow><FeatInfo />特征信息</SmallRow>
              <SmallRow><FeatInfo f="#a9dcf0" />模型信息</SmallRow>
              <SmallRow><ListInfo />特征列表</SmallRow>
            </SmallCol>
            <RibbonSep />
            <Big $w={50} $ml={8}>
              <BigIcon $pt={6}><ChainIcon /></BigIcon>
              <BigText>参考查看器</BigText>
            </Big>
            <Big $w={40} $ml={3}>
              <BigIcon $pt={7}><BinoIcon /></BigIcon>
              <BigText>查找</BigText>
            </Big>
            <SmallCol $w={84} $ml={4}>
              <SmallRow $off><GeoCheck />几何检查</SmallRow>
              <SmallRow><LogIcon />消息日志</SmallRow>
              <SmallRow><CompareIcon />比较零件<RowCaret><Caret /></RowCaret></SmallRow>
            </SmallCol>
          </GroupBody>
          <GroupLabel>调查<Caret /></GroupLabel>
        </Group>
        <Group $w={235}>
          <GroupBody>
            <Big $w={52} $ml={5}>
              <BigIcon $pt={7}><PuzzleIcon /></BigIcon>
              <BigText>元件界面</BigText>
            </Big>
            <Big $w={52} $ml={4}>
              <BigIcon $pt={8}><PublishIcon /></BigIcon>
              <BigText>发布几何</BigText>
            </Big>
            <Big $w={40} $ml={2}>
              <BigIcon $pt={9}><TableIcon /></BigIcon>
              <BigText>族表</BigText>
            </Big>
            <SmallCol $w={70} $ml={4}>
              <SmallRow><ParamIcon />参数</SmallRow>
              <SmallRow><SwitchDim />切换尺寸</SmallRow>
              <SmallRow><RelIcon />关系</SmallRow>
            </SmallCol>
          </GroupBody>
          <GroupLabel>模型意图<Caret /></GroupLabel>
        </Group>
        <Group $w={195}>
          <GroupBody>
            <SmallCol $w={100} $ml={7}>
              <SmallRow><UdfIcon />UDF 库</SmallRow>
              <SmallRow><AppearIcon />外观管理器</SmallRow>
              <SmallRow><AuxIcon />辅助应用程序</SmallRow>
            </SmallCol>
            <SmallCol $w={84} $ml={0}>
              <SmallRow><ImgEdit />图像编辑器</SmallRow>
            </SmallCol>
          </GroupBody>
          <GroupLabel>实用工具</GroupLabel>
        </Group>
        <Group $w={139}>
          <GroupBody>
            <Big $w={50} $ml={6}>
              <BigIcon $pt={6}><TargetIcon /></BigIcon>
              <BigText>空间目标</BigText>
            </Big>
            <SmallCol $w={72} $ml={7}>
              <SmallRow><CloudIcon />发布模型</SmallRow>
              <SmallRow><ShareIcon />管理模型</SmallRow>
            </SmallCol>
          </GroupBody>
          <GroupLabel>增强现实</GroupLabel>
        </Group>
        <RibbonRest>
          <RestTop />
          <RestBottom />
        </RibbonRest>
      </Ribbon>
      <Dark />
      <Main>
        <Left>
          <PanelTabs>
            <PanelTab $w={75} $on><TreeMini />模型树</PanelTab>
            <PanelTab $w={111}><FoldersI />文件夹浏览器</PanelTab>
            <PanelTab $w={75}><FavI />收藏夹</PanelTab>
          </PanelTabs>
          <PanelHead>
            模型树
            <HeadTools>
              <ToolsI />
              <HeadGap $w={8} />
              <Caret />
              <HeadGap $w={13} />
              <ListDoc />
              <HeadGap $w={8} />
              <Caret />
              <HeadGap $w={13} />
              <ShowI />
            </HeadTools>
          </PanelHead>
          <FilterRow>
            <FilterI />
            <SearchBox>
              <G width="12" height="12" viewBox="0 0 12 12"><path d="M2 2l8 8M10 2l-8 8" stroke="#a0a0a0" strokeWidth="1.200" /></G>
            </SearchBox>
            <HeadGap $w={6} />
            <Caret />
            <HeadGap $w={9} />
            <G width="12" height="12" viewBox="0 0 12 12"><path d="M6 0v12M0 6h12" stroke="#8f8f8f" strokeWidth="3" /></G>
          </FilterRow>
          <Tree>
            <Row>
              <Gutter $w={2} />
              <RowIconBox><Cube s={13} f="#a9dcf0" t="#d6eef8" r="#54a8cc" /></RowIconBox>
              <Label>PRT0002.PRT</Label>
            </Row>
            {treeRows.map((r) => (
              <Row key={r.text}>
                <Gutter $w={22}>{r.exp && <Expander />}</Gutter>
                <RowIconBox>{r.icon}</RowIconBox>
                <Label $sel={r.sel}>{r.text}</Label>
              </Row>
            ))}
            <Mini>
              <MiniRow $line>
                <MiniBtn $on><Dim /></MiniBtn>
                <G width="16" height="17" viewBox="0 0 16 17" $ml={4}>
                  <circle cx="7" cy="10" r="6.500" fill="#d0a868" stroke="#9a7a40" strokeWidth=".5" />
                  <path d="M15 0L5 11" stroke="#888" strokeWidth="1.500" />
                </G>
                <G width="16" height="16" viewBox="0 0 16 16" $ml={8}>
                  <path d="M1 15l4-4M7 9l3-3M11 5l4-4" stroke="#444" strokeWidth="2" />
                </G>
                <G width="16" height="16" viewBox="0 0 16 16" $ml={7}>
                  <circle cx="7" cy="7" r="6.500" fill="#d8bc88" />
                  <rect x="8" y="8" width="8" height="8" fill="#444" />
                </G>
                <G width="17" height="17" viewBox="0 0 17 17" $ml={8}>
                  <path d="M1 1h4v4H1zM3 5v12M9 6h4v4H9z" fill="none" stroke="#666" />
                  <path d="M8 9v7l8-3z" fill="#fff" stroke="#666" />
                </G>
                <MiniEnd $pr={15}><Caret /></MiniEnd>
              </MiniRow>
              <MiniRow $line>
                <MiniEnd $pr={4}><MirrorI /></MiniEnd>
              </MiniRow>
              <MiniRow>
                <G width="12" height="18" viewBox="0 0 12 18"><path d="M1 1v14l3-3 3 5 2-1-3-5h4z" fill="#eee" stroke="#999" /></G>
              </MiniRow>
            </Mini>
            <Tip>
              <TipRow><Dim />编辑尺寸</TipRow>
              <TipPlain>编辑</TipPlain>
            </Tip>
          </Tree>
        </Left>
        <Viewport>
          <Model />
          <ViewBar>
            {viewIcons.map((v, i) => (
              <ViewBtn key={i} $on={v.on}>
                {v.corner ? <Corner>{v.icon}</Corner> : v.icon}
              </ViewBtn>
            ))}
          </ViewBar>
        </Viewport>
      </Main>
      <Status>
        <StatusBox><TreeMini c="#555" /></StatusBox>
        <StatusSlot $ml={6}>
          <G width="18" height="18" viewBox="0 0 18 18">
            <circle cx="9" cy="9" r="6.500" fill="#3d94d8" />
            <path d="M5 6c2-2 5-1 5 1s-4 1-4 4 3 3 5 2" fill="#bfe0f3" />
            <path d="M2 14C4 8 10 3 16 2" stroke="#555" strokeWidth="1.200" fill="none" />
          </G>
        </StatusSlot>
        <StatusSlot $ml={9}>
          <G width="17" height="17" viewBox="0 0 17 17">
            <rect x=".5" y=".5" width="16" height="16" rx="1" fill="#e6eff4" stroke="#2d7ea4" />
          </G>
        </StatusSlot>
        <StatusSep $ml={12} />
        <Bullet />
        <Msg>从上次重新生成起零件'PRT0002'未被更改。</Msg>
        <RightStatus>
          <StatusSep $ml={0} />
          <StatusSlot $ml={40}><StatusSep $ml={0} /></StatusSlot>
          <FindBtn><BinoIcon w={16} h={17} /></FindBtn>
          <FindDrop><Caret /></FindDrop>
          <StatusSep $ml={1} />
          <SelText>选择了 1 项</SelText>
          <GeoSelect>几何<Caret /></GeoSelect>
          <Grip>
            <G width="12" height="12" viewBox="0 0 12 12"><path d="M0 12L12 0M4 12l8-8M8 12l4-4" stroke="#b5b5b5" /></G>
          </Grip>
        </RightStatus>
      </Status>
      <Mark>
        <MarkFlame width="30" height="45" viewBox="0 0 30 45">
          <path d="M15 2C25 10 25 28 18 42C20 30 16 14 15 2Z" fill="#ff6a33" />
          <path d="M12 14C17 24 18 34 14 44C12 34 12 24 12 14Z" fill="#ff6a33" />
        </MarkFlame>
        <MarkFire>野火</MarkFire>
        <MarkForum>论坛</MarkForum>
        <MarkUrl>www.proewildfire.cn</MarkUrl>
      </Mark>
    </Window>
  );
}
